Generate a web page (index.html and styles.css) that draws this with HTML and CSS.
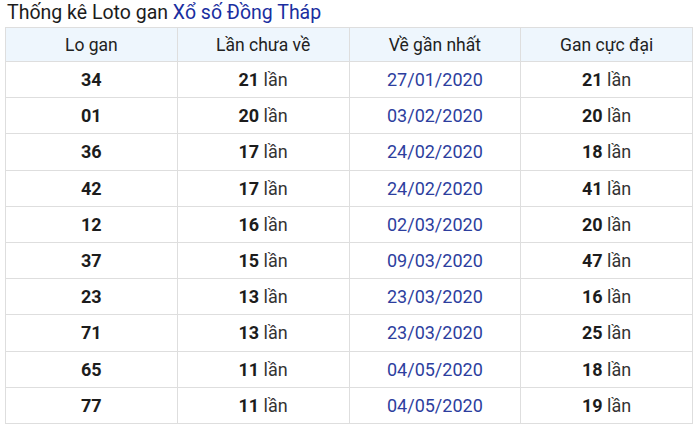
FILE: index.html
```html
<!DOCTYPE html>
<html lang="vi">
<head>
<meta charset="utf-8">
<link rel="stylesheet" href="styles.css">
</head>
<body>
<div class="wrap">
  <h2 class="title">Thống kê Loto gan <a class="link" href="#">Xổ số Đồng Tháp</a></h2>
  <table class="gan">
    <thead>
      <tr><th>Lo gan</th><th>Lần chưa về</th><th>Về gần nhất</th><th>Gan cực đại</th></tr>
    </thead>
    <tbody>
      <tr><td><b>34</b></td><td><b>21</b> lần</td><td class="date">27/01/2020</td><td><b>21</b> lần</td></tr>
      <tr><td><b>01</b></td><td><b>20</b> lần</td><td class="date">03/02/2020</td><td><b>20</b> lần</td></tr>
      <tr><td><b>36</b></td><td><b>17</b> lần</td><td class="date">24/02/2020</td><td><b>18</b> lần</td></tr>
      <tr><td><b>42</b></td><td><b>17</b> lần</td><td class="date">24/02/2020</td><td><b>41</b> lần</td></tr>
      <tr><td><b>12</b></td><td><b>16</b> lần</td><td class="date">02/03/2020</td><td><b>20</b> lần</td></tr>
      <tr><td><b>37</b></td><td><b>15</b> lần</td><td class="date">09/03/2020</td><td><b>47</b> lần</td></tr>
      <tr><td><b>23</b></td><td><b>13</b> lần</td><td class="date">23/03/2020</td><td><b>16</b> lần</td></tr>
      <tr><td><b>71</b></td><td><b>13</b> lần</td><td class="date">23/03/2020</td><td><b>25</b> lần</td></tr>
      <tr><td><b>65</b></td><td><b>11</b> lần</td><td class="date">04/05/2020</td><td><b>18</b> lần</td></tr>
      <tr><td><b>77</b></td><td><b>11</b> lần</td><td class="date">04/05/2020</td><td><b>19</b> lần</td></tr>
    </tbody>
  </table>
</div>
</body>
</html>
```
FILE: styles.css
```css
html, body {
  margin: 0;
  padding: 0;
  background: #fff;
}
body {
  font-family: Roboto, "Liberation Sans", Arial, sans-serif;
  color: #222;
}
.wrap {
  padding: 0 7px 0 5px;
}
.title {
  margin: 0;
  padding: 0 0 0 2px;
  height: 27px;
  font-size: 19.5px;
  font-weight: 400;
  line-height: 25px;
  color: #1c1c1c;
}
.link {
  color: #1a2ea0;
  text-decoration: none;
}
.gan {
  width: 688px;
  border-collapse: collapse;
  table-layout: fixed;
  font-size: 18px;
}
.gan th, .gan td {
  border: 1px solid #dedede;
  text-align: center;
  padding: 0;
}
.gan th {
  background: #eef6fd;
  font-weight: 400;
  font-size: 17.5px;
  height: 33px;
  color: #222;
}
.gan td {
  height: 35.2px;
  color: #333;
}
.gan td b {
  color: #1c1c1c;
  font-weight: 700;
}
.gan td.date {
  color: #2d3e9e;
}
```
